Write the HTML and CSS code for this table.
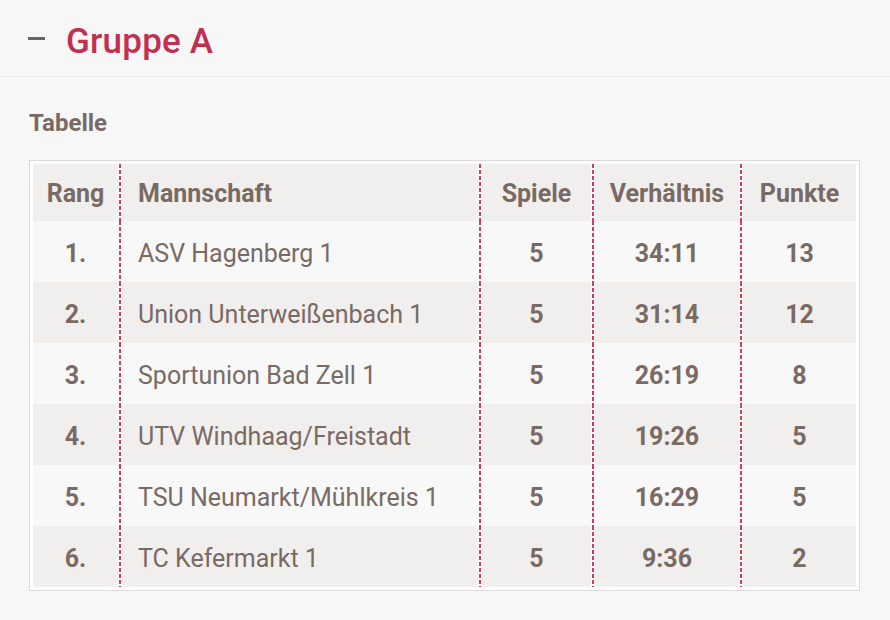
FILE: index.html
```html
<!DOCTYPE html>
<html lang="de">
<head>
<meta charset="utf-8">
<title>Gruppe A</title>
<link rel="stylesheet" href="styles.css">
</head>
<body>
<div class="panel">
  <div class="panel-head">
    <span class="toggle"></span>
    <h2 class="group-title">Gruppe A</h2>
  </div>
  <div class="panel-body">
    <h3 class="section-title">Tabelle</h3>
    <div class="table-wrap">
      <table class="standings">
        <colgroup>
          <col class="w-rank"><col class="w-team"><col class="w-games"><col class="w-ratio"><col class="w-points">
        </colgroup>
        <thead>
          <tr>
            <th class="c-rank">Rang</th>
            <th class="c-team">Mannschaft</th>
            <th class="c-num">Spiele</th>
            <th class="c-num">Verhältnis</th>
            <th class="c-num">Punkte</th>
          </tr>
        </thead>
        <tbody>
          <tr><td class="c-rank">1.</td><td class="c-team">ASV Hagenberg 1</td><td class="c-num">5</td><td class="c-num">34:11</td><td class="c-num">13</td></tr>
          <tr><td class="c-rank">2.</td><td class="c-team">Union Unterweißenbach 1</td><td class="c-num">5</td><td class="c-num">31:14</td><td class="c-num">12</td></tr>
          <tr><td class="c-rank">3.</td><td class="c-team">Sportunion Bad Zell 1</td><td class="c-num">5</td><td class="c-num">26:19</td><td class="c-num">8</td></tr>
          <tr><td class="c-rank">4.</td><td class="c-team">UTV Windhaag/Freistadt</td><td class="c-num">5</td><td class="c-num">19:26</td><td class="c-num">5</td></tr>
          <tr><td class="c-rank">5.</td><td class="c-team">TSU Neumarkt/Mühlkreis 1</td><td class="c-num">5</td><td class="c-num">16:29</td><td class="c-num">5</td></tr>
          <tr><td class="c-rank">6.</td><td class="c-team">TC Kefermarkt 1</td><td class="c-num">5</td><td class="c-num">9:36</td><td class="c-num">2</td></tr>
        </tbody>
      </table>
    </div>
  </div>
</div>
</body>
</html>
```
FILE: styles.css
```css
html, body {
  margin: 0;
  padding: 0;
  background: #f7f7f7;
}
body {
  font-family: Roboto, "Liberation Sans", sans-serif;
  color: #7a6a64;
}
.panel {
  width: 890px;
}
.panel-head {
  display: flex;
  align-items: center;
  height: 77px;
  padding-left: 28px;
  padding-top: 2px;
  box-sizing: border-box;
  border-bottom: 1px solid #e9e9e9;
}
.toggle {
  display: block;
  width: 17px;
  height: 3px;
  background: #666;
  margin-right: 21px;
  margin-top: -2px;
}
.group-title {
  margin: 4px 0 0 0;
  font-size: 35px;
  font-weight: 500;
  color: #c1304f;
  letter-spacing: 0.2px;
}
.panel-body {
  padding: 32px 29px 0 29px;
}
.section-title {
  margin: 0 0 23px 0;
  font-size: 24px;
  font-weight: 700;
  line-height: 28px;
  color: #7a6a64;
}
.table-wrap {
  width: 823px;
  background: #fff;
  border: 1px solid #dadada;
  padding: 3px;
}
.standings {
  width: 823px;
  border-collapse: separate;
  border-spacing: 0;
  table-layout: fixed;
  font-size: 25px;
}
.w-rank { width: 85px; }
.w-team { width: 360px; }
.w-games { width: 113px; }
.w-ratio { width: 148px; }
.w-points { width: 117px; }

.standings th,
.standings td {
  padding: 0;
  --cell: #f8f8f8;
  background-color: var(--cell);
}
.standings th + th,
.standings td + td {
  padding-left: 4px;
  background-image:
    linear-gradient(#d63a5e 4px, transparent 4px),
    linear-gradient(#fff, #fff);
  background-size: 2px 6px, 4px 100%;
  background-position: 1px 0, 0 0;
  background-repeat: repeat-y, no-repeat;
}
.standings thead th {
  height: 56px;
  padding-top: 1px;
  --cell: #f1efed;
  font-weight: 700;
  color: #7a6a64;
}
.standings tbody td {
  height: 58px;
  padding-top: 3px;
}
.standings tbody tr:nth-child(even) td {
  --cell: #f1efed;
}
.c-rank {
  text-align: center;
  font-weight: 700;
}
.standings td.c-team,
.standings th.c-team {
  text-align: left;
  padding-left: 20px;
  font-weight: 400;
}
.standings thead th.c-team { font-weight: 700; }
.c-num {
  text-align: center;
  font-weight: 700;
}
```
